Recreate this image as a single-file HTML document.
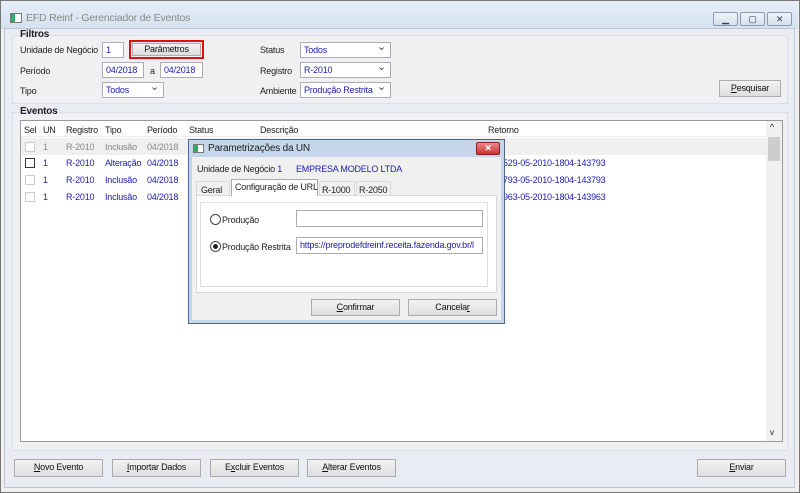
<!DOCTYPE html>
<html><head><meta charset="utf-8"><style>
*{box-sizing:border-box;margin:0;padding:0}
body{width:800px;height:493px;background:#8c8c8c;font-family:"Liberation Sans",sans-serif;font-size:9px;letter-spacing:-0.2px;color:#222;position:relative;overflow:hidden;white-space:nowrap}
.a{position:absolute}
.win{left:0;top:0;width:800px;height:493px;background:#f0f0f0;border:1px solid #777}
.tb{left:1px;top:1px;width:797px;height:28px;background:linear-gradient(#e6eef8,#d5e1ef)}
.bg{background:#f0f0f3}
.inp{background:#fff;border:1px solid #abadb3;color:#2020b0;padding-left:3px;line-height:14px;overflow:hidden}
.btn{background:linear-gradient(#f2f2f2,#dedede);border:1px solid #acacac;text-align:center;line-height:15px;color:#111}
.sel::after{content:"⌄";position:absolute;right:4px;top:-3px;color:#444;font-size:11px}
.blue{color:#2020b0}.gray{color:#888}
.cb{width:10px;height:10px;border:1px solid #ccc;background:#fff}
.wb{top:12px;width:25px;height:14px;border:1px solid #8a9bb0;border-radius:2px;background:linear-gradient(#eef3f9,#d6e0ec);font-size:9px;text-align:center;line-height:12px;color:#345}
</style></head><body>
<div class="a win"></div>
<div class="a tb"></div>
<div class="a" style="left:10px;top:13px;width:12px;height:10px;border:1px solid #777;background:#fff"><div style="width:4px;height:8px;background:#3a6"></div></div>
<div class="a" style="left:26px;top:12px;font-size:10.5px;color:#888">EFD Reinf - Gerenciador de Eventos</div>
<div class="a wb" style="left:713px">▁</div>
<div class="a wb" style="left:740px">▢</div>
<div class="a wb" style="left:767px">✕</div>
<div class="a" style="left:4px;top:28px;width:791px;height:460px;background:#e9edf3;border:1px solid #b9c6d6"></div>
<div class="a bg" style="left:12px;top:35px;width:776px;height:69px;border:1px solid #dde"></div>
<div class="a" style="left:20px;top:29px;font-weight:bold;font-size:10px">Filtros</div>
<div class="a" style="left:20px;top:45px">Unidade de Negócio</div>
<div class="a inp" style="left:102px;top:42px;width:22px;height:16px">1</div>
<div class="a" style="left:129px;top:40px;width:75px;height:19px;border:2px solid #e01010"></div>
<div class="a btn" style="left:132px;top:43px;width:69px;height:13px;line-height:11px">Parâmetros</div>
<div class="a" style="left:20px;top:66px">Período</div>
<div class="a inp" style="left:102px;top:62px;width:42px;height:16px">04/2018</div>
<div class="a" style="left:150px;top:66px">a</div>
<div class="a inp" style="left:160px;top:62px;width:43px;height:16px">04/2018</div>
<div class="a" style="left:20px;top:86px">Tipo</div>
<div class="a inp sel" style="left:102px;top:82px;width:62px;height:16px">Todos</div>
<div class="a" style="left:260px;top:45px">Status</div>
<div class="a inp sel" style="left:300px;top:42px;width:91px;height:16px">Todos</div>
<div class="a" style="left:260px;top:66px">Registro</div>
<div class="a inp sel" style="left:300px;top:62px;width:91px;height:16px">R-2010</div>
<div class="a" style="left:260px;top:86px">Ambiente</div>
<div class="a inp sel" style="left:300px;top:82px;width:91px;height:16px">Produção Restrita</div>
<div class="a btn" style="left:719px;top:80px;width:62px;height:17px"><u>P</u>esquisar</div>
<div class="a bg" style="left:12px;top:112px;width:776px;height:339px;border:1px solid #dde"></div>
<div class="a" style="left:20px;top:106px;font-weight:bold;font-size:10px">Eventos</div>
<div class="a" style="left:20px;top:120px;width:763px;height:322px;background:#fff;border:1px solid #999"></div>
<div class="a" style="left:21px;top:121px;width:745px;height:16px;border-bottom:1px solid #eee"></div>
<div class="a" style="left:24px;top:125px">Sel</div><div class="a" style="left:43px;top:125px">UN</div><div class="a" style="left:66px;top:125px">Registro</div><div class="a" style="left:105px;top:125px">Tipo</div><div class="a" style="left:147px;top:125px">Período</div><div class="a" style="left:189px;top:125px">Status</div><div class="a" style="left:260px;top:125px">Descrição</div><div class="a" style="left:488px;top:125px">Retorno</div>
<div class="a" style="left:21px;top:138px;width:745px;height:17px;background:#f0f0f0"></div>
<div class="a" style="left:766px;top:121px;width:16px;height:320px;background:#f0f0f0"></div>
<div class="a" style="left:768px;top:137px;width:12px;height:24px;background:#cdcdcd"></div>
<div class="a" style="left:770px;top:122px;font-size:9px">^</div>
<div class="a" style="left:770px;top:428px;font-size:8px">v</div>
<div class="a cb" style="left:25px;top:142px"></div><div class="a gray" style="left:43px;top:142px">1</div><div class="a gray" style="left:66px;top:142px">R-2010</div><div class="a gray" style="left:105px;top:142px">Inclusão</div><div class="a gray" style="left:147px;top:142px">04/2018</div>
<div class="a cb" style="left:25px;top:158px;border-color:#333"></div><div class="a blue" style="left:43px;top:158px">1</div><div class="a blue" style="left:66px;top:158px">R-2010</div><div class="a blue" style="left:105px;top:158px">Alteração</div><div class="a blue" style="left:147px;top:158px">04/2018</div><div class="a blue" style="left:503px;top:158px">529-05-2010-1804-143793</div>
<div class="a cb" style="left:25px;top:175px"></div><div class="a blue" style="left:43px;top:175px">1</div><div class="a blue" style="left:66px;top:175px">R-2010</div><div class="a blue" style="left:105px;top:175px">Inclusão</div><div class="a blue" style="left:147px;top:175px">04/2018</div><div class="a blue" style="left:503px;top:175px">793-05-2010-1804-143793</div>
<div class="a cb" style="left:25px;top:192px"></div><div class="a blue" style="left:43px;top:192px">1</div><div class="a blue" style="left:66px;top:192px">R-2010</div><div class="a blue" style="left:105px;top:192px">Inclusão</div><div class="a blue" style="left:147px;top:192px">04/2018</div><div class="a blue" style="left:503px;top:192px">963-05-2010-1804-143963</div>
<div class="a btn" style="left:14px;top:459px;width:89px;height:18px"><u>N</u>ovo Evento</div>
<div class="a btn" style="left:112px;top:459px;width:89px;height:18px"><u>I</u>mportar Dados</div>
<div class="a btn" style="left:210px;top:459px;width:89px;height:18px">E<u>x</u>cluir Eventos</div>
<div class="a btn" style="left:307px;top:459px;width:89px;height:18px"><u>A</u>lterar Eventos</div>
<div class="a btn" style="left:697px;top:459px;width:89px;height:18px"><u>E</u>nviar</div>
<!-- dialog -->
<div class="a" style="left:188px;top:139px;width:317px;height:185px;background:#c5d6ea;border:1px solid #4a6a88"></div>
<div class="a" style="left:193px;top:144px;width:11px;height:9px;border:1px solid #777;background:#fff"><div style="width:4px;height:7px;background:#3a6"></div></div>
<div class="a" style="left:208px;top:143px;font-size:10px">Parametrizações da UN</div>
<div class="a" style="left:476px;top:142px;width:24px;height:13px;background:linear-gradient(#e88,#c33);border:1px solid #822;border-radius:2px;color:#fff;text-align:center;font-size:9px;line-height:11px;font-weight:bold">✕</div>
<div class="a" style="left:192px;top:157px;width:309px;height:163px;background:#f0f0f0"></div>
<div class="a" style="left:197px;top:164px">Unidade de Negócio <span class="blue">1</span></div>
<div class="a blue" style="left:296px;top:164px">EMPRESA MODELO LTDA</div>
<div class="a" style="left:196px;top:195px;width:301px;height:98px;background:#fff;border:1px solid #d9d9d9"></div>
<div class="a" style="left:200px;top:202px;width:288px;height:85px;border:1px solid #ddd"></div>
<div class="a" style="left:196px;top:181px;width:34px;height:15px;border:1px solid #d9d9d9;padding:3px 4px">Geral</div>
<div class="a" style="left:231px;top:179px;width:87px;height:17px;background:#fff;border:1px solid #aaa;border-bottom:none;padding:2px 3px">Configuração de URL</div>
<div class="a" style="left:319px;top:181px;width:36px;height:15px;border:1px solid #d9d9d9;padding:3px 2px">R-1000</div>
<div class="a" style="left:356px;top:181px;width:35px;height:15px;border:1px solid #d9d9d9;padding:3px 2px">R-2050</div>
<div class="a" style="left:210px;top:214px;width:11px;height:11px;border:1px solid #444;border-radius:50%;background:#fff"></div>
<div class="a" style="left:222px;top:215px">Produção</div>
<div class="a inp" style="left:296px;top:210px;width:187px;height:17px"></div>
<div class="a" style="left:210px;top:241px;width:11px;height:11px;border:1px solid #444;border-radius:50%;background:#fff"><div style="margin:2px;width:5px;height:5px;border-radius:50%;background:#222"></div></div>
<div class="a" style="left:222px;top:242px">Produção Restrita</div>
<div class="a inp" style="left:296px;top:237px;width:187px;height:17px;line-height:15px">https://preprodefdreinf.receita.fazenda.gov.br/l</div>
<div class="a btn" style="left:311px;top:299px;width:89px;height:17px"><u>C</u>onfirmar</div>
<div class="a btn" style="left:408px;top:299px;width:89px;height:17px">Cancela<u>r</u></div>
</body></html>
